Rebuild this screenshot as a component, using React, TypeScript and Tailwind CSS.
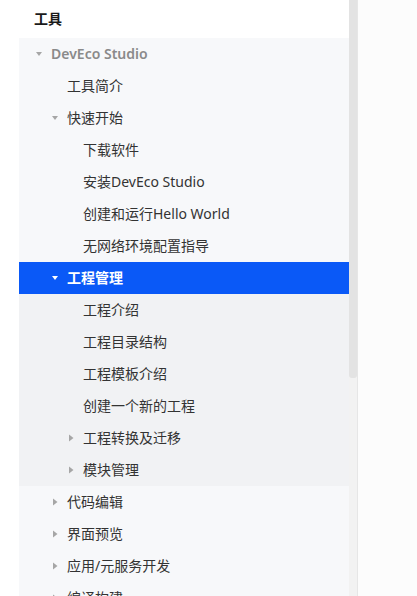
type Item = {
  label: string
  level: number
  caret?: 'down' | 'right'
  active?: boolean
  tone?: 'muted' | 'group'
  bold?: boolean
}

const items: Item[] = [
  { label: 'DevEco Studio', level: 0, caret: 'down', tone: 'muted', bold: true },
  { label: '工具简介', level: 1 },
  { label: '快速开始', level: 1, caret: 'down' },
  { label: '下载软件', level: 2 },
  { label: '安装DevEco Studio', level: 2 },
  { label: '创建和运行Hello World', level: 2 },
  { label: '无网络环境配置指导', level: 2 },
  { label: '工程管理', level: 1, caret: 'down', active: true, bold: true },
  { label: '工程介绍', level: 2, tone: 'group' },
  { label: '工程目录结构', level: 2, tone: 'group' },
  { label: '工程模板介绍', level: 2, tone: 'group' },
  { label: '创建一个新的工程', level: 2, tone: 'group' },
  { label: '工程转换及迁移', level: 2, caret: 'right', tone: 'group' },
  { label: '模块管理', level: 2, caret: 'right', tone: 'group' },
  { label: '代码编辑', level: 1, caret: 'right' },
  { label: '界面预览', level: 1, caret: 'right' },
  { label: '应用/元服务开发', level: 1, caret: 'right' },
  { label: '编译构建', level: 1, caret: 'right' },
]

const padByLevel = ['pl-[32px]', 'pl-[48px]', 'pl-[64px]']

function Caret({ dir, color }: { dir: 'down' | 'right'; color: string }) {
  return (
    <svg width="8" height="8" viewBox="0 0 8 8" className="absolute left-[-16px] top-1/2 -translate-y-1/2">
      {dir === 'down' ? (
        <path d="M1 2 L7 2 L4 6 Z" fill={color} />
      ) : (
        <path d="M2 0.5 L6.5 4 L2 7.5 Z" fill={color} />
      )}
    </svg>
  )
}

function Row({ item }: { item: Item }) {
  const bg = item.active ? 'bg-[#0a59f7]' : item.tone === 'group' ? 'bg-[#f1f2f4]' : ''
  const text = item.active
    ? 'text-white'
    : item.tone === 'muted'
      ? 'text-[#8a8a8a]'
      : 'text-[#333333]'
  const caretColor = item.active ? '#ffffff' : '#a6a6a6'

  return (
    <div className={`flex h-8 shrink-0 items-center ${bg} ${padByLevel[item.level]}`}>
      <span className={`relative text-sm leading-none ${text} ${item.bold ? 'font-semibold' : 'font-normal'}`}>
        {item.caret && <Caret dir={item.caret} color={caretColor} />}
        {item.label}
      </span>
    </div>
  )
}

export default function App() {
  return (
    <div className="flex h-[596px] overflow-hidden bg-white font-['Noto_Sans','Noto_Sans_CJK_SC',sans-serif]">
      <div className="w-[19px] shrink-0 bg-white" />

      <nav className="flex w-[330px] shrink-0 flex-col">
        <div className="flex h-[38px] shrink-0 items-center bg-white pl-[15px]">
          <span className="text-sm font-bold leading-none text-[#1a1a1a]">工具</span>
        </div>
        <div className="flex flex-1 flex-col bg-[#f7f8fa]">
          {items.map((item) => (
            <Row key={item.label} item={item} />
          ))}
        </div>
      </nav>

      <div className="flex w-[9px] shrink-0 flex-col border-r border-[#e6e6e6] bg-[#f2f2f2]">
        <div className="h-[378px] rounded-b-[3px] bg-[#e3e3e3]" />
      </div>

      <div className="flex-1 bg-[#fcfcfc]" />
    </div>
  )
}
